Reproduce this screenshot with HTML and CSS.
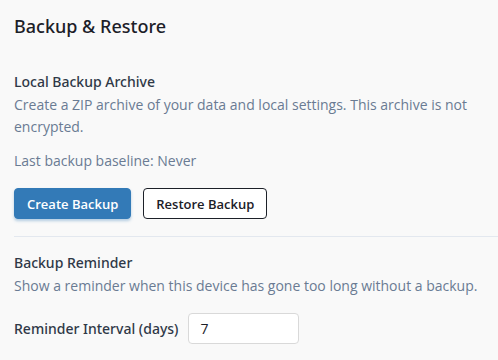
FILE: index.html
```html
<!DOCTYPE html>
<html>
<head>
<meta charset="utf-8">
<link rel="stylesheet" href="styles.css">
</head>
<body>
<div class="page">
  <h1 class="title">Backup &amp; Restore</h1>
  <section class="section">
    <h2 class="section-title">Local Backup Archive</h2>
    <p class="desc">Create a ZIP archive of your data and local settings. This archive is not encrypted.</p>
    <p class="desc meta">Last backup baseline: Never</p>
    <div class="actions">
      <button class="btn btn-primary">Create Backup</button>
      <button class="btn btn-outline">Restore Backup</button>
    </div>
  </section>
  <section class="section second">
    <h2 class="section-title">Backup Reminder</h2>
    <p class="desc">Show a reminder when this device has gone too long without a backup.</p>
    <div class="field">
      <label class="label" for="interval">Reminder Interval (days)</label>
      <input class="input" id="interval" type="text" value="7">
    </div>
  </section>
</div>
</body>
</html>
```
FILE: styles.css
```css
html, body {
  margin: 0;
  padding: 0;
  background: #f9f9f9;
}
body {
  font-family: "Open Sans", "Noto Sans", sans-serif;
  color: #2b2f36;
}
.page {
  padding: 13px 0 0 14px;
}
.title {
  margin: 0;
  font-family: "Noto Sans", "Open Sans", sans-serif;
  font-size: 18px;
  font-weight: 500;
  line-height: 26px;
  color: #1c2028;
}
.section {
  margin-top: 32px;
}
.section-title {
  margin: 0;
  font-family: "Noto Sans", "Open Sans", sans-serif;
  font-size: 14px;
  font-weight: 500;
  line-height: 22px;
  color: #2f3847;
}
.desc {
  margin: 1px 0 0;
  font-size: 14px;
  line-height: 22px;
  color: #6a7b93;
  padding-right: 14px;
}
.meta {
  margin-top: 12px;
}
.actions {
  display: flex;
  gap: 12px;
  margin-top: 16px;
  padding-bottom: 17px;
  border-bottom: 1px solid #e3e8ef;
}
.btn {
  font-family: "Open Sans", "Noto Sans", sans-serif;
  font-size: 13px;
  font-weight: 600;
  height: 31px;
  border-radius: 4px;
  padding: 0 12px;
  cursor: pointer;
}
.btn-primary {
  background: #337ab7;
  color: #fff;
  border: 1px solid #337ab7;
  box-shadow: 0 2px 3px rgba(51, 122, 183, 0.35);
}
.btn-outline {
  background: #fff;
  color: #1c2028;
  border: 1px solid #1c2028;
}
.second {
  margin-top: 15px;
}
.field {
  display: flex;
  align-items: center;
  gap: 10px;
  margin-top: 16px;
}
.label {
  font-family: "Noto Sans", "Open Sans", sans-serif;
  font-size: 14px;
  font-weight: 500;
  line-height: 22px;
  color: #2f3847;
}
.input {
  width: 111px;
  height: 31px;
  box-sizing: border-box;
  border: 1px solid #d9d9d9;
  border-radius: 4px;
  background: #fff;
  padding: 0 11px;
  font-family: "Open Sans", "Noto Sans", sans-serif;
  font-size: 14px;
  color: #1c2028;
}
```
